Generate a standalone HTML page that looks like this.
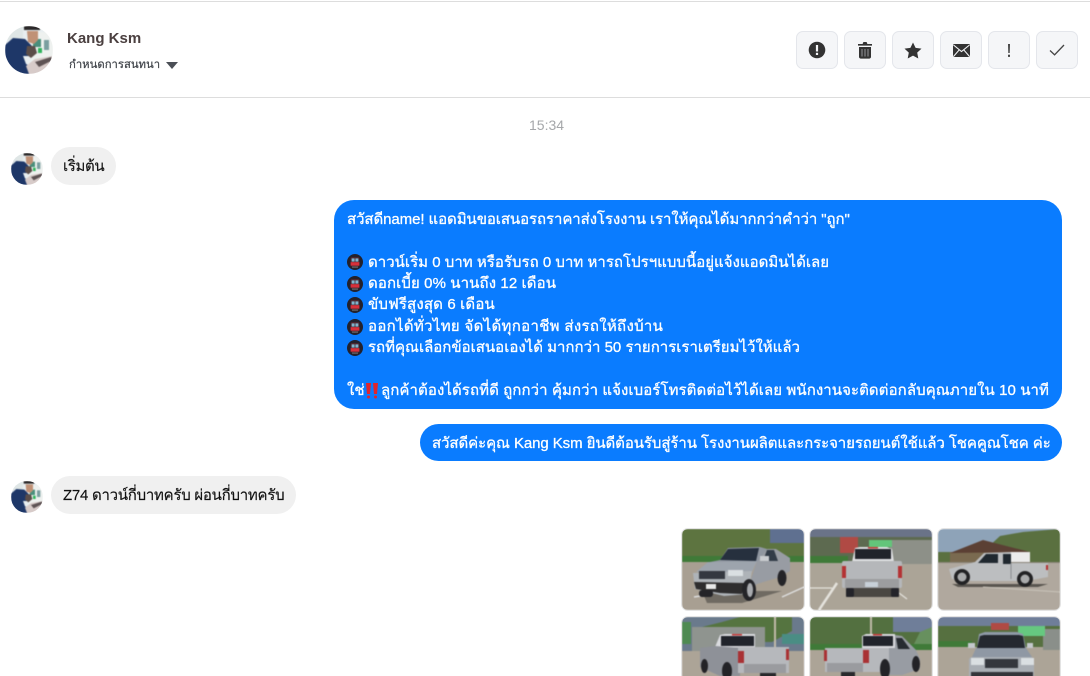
<!DOCTYPE html>
<html lang="th">
<head>
<meta charset="utf-8">
<title>Chat</title>
<style>
html,body{margin:0;padding:0;width:1090px;height:676px;overflow:hidden;background:#fff}
body{position:relative;font-family:"Liberation Sans","Noto Sans CJK JP",sans-serif;color:#111}
.a{position:absolute;white-space:nowrap}
.line{left:0;width:1090px;height:1px;background:#ddd}
.btn{top:31px;width:40px;height:36px;background:#f5f6f8;border:1px solid #e4e6eb;border-radius:7px;display:flex;align-items:center;justify-content:center}
.blue{background:#0a7cff}
.gray{background:#f0f0f0}
.t{font-size:15px;line-height:21px;color:#fff;left:347px;-webkit-text-stroke:.3px #fff}
.d{font-size:15px;line-height:21px;color:#111;-webkit-text-stroke:.15px #111}
.tile{border-radius:6px;overflow:hidden;box-shadow:0 0 0 1px #e3e3e3}
.tile svg{filter:blur(.5px)}
.av{border-radius:50%;overflow:hidden}
.av svg{filter:blur(.5px)}
svg{display:block}
</style>
</head>
<body>
<svg width="0" height="0" style="position:absolute">
<defs>
<symbol id="av" viewBox="0 0 48 48">
<rect width="48" height="48" fill="#e8eef0"/>
<rect x="26" y="6" width="22" height="32" fill="#eef1ef"/>
<rect x="28" y="13" width="8" height="8" fill="#4a8f7c"/>
<rect x="33" y="22" width="4" height="5" fill="#2fb45c"/>
<rect x="39" y="14" width="5" height="10" fill="#7a9fa0"/>
<rect x="0" y="0" width="18" height="14" fill="#dfe6e6"/>
<path d="M0 19L8 12 20 13 27 20 26 30 18 30 21 38 28 42 26 48H0Z" fill="#1e3768"/>
<path d="M22 5H33V14L29 18 23 16Z" fill="#c09176"/>
<path d="M19 0H35V4H19Z" fill="#2b2829"/>
<path d="M22 20L30 20 32 27 26 32 21 28Z" fill="#5b4d49"/>
<path d="M21 40L30 33 48 30V48H24Z" fill="#d7cbc9"/>
<path d="M30 36L46 31 48 34 34 41Z" fill="#5e5354"/>
</symbol>
<symbol id="me" viewBox="0 0 16 16">
<circle cx="8" cy="8" r="8" fill="#23212c"/>
<rect x="3.6" y="3" width="8.8" height="9.6" rx="1.6" fill="#4c2730"/>
<rect x="4.6" y="4.4" width="3" height="3.2" fill="#7fb3cc"/>
<rect x="8.4" y="4.4" width="3" height="3.2" fill="#7fb3cc"/>
<rect x="3.6" y="8.2" width="8.8" height="3.4" fill="#d8303a"/>
<rect x="5" y="12.6" width="6" height="1" fill="#777"/>
</symbol>
<symbol id="car1" viewBox="0 0 122 81">
<rect width="122" height="81" fill="#a89f92"/>
<rect width="122" height="28" fill="#5d7440"/>
<rect x="88" width="34" height="14" fill="#5f7090"/>
<rect y="27" width="122" height="6" fill="#3f7a38"/>
<path d="M100 68L122 58M12 68L25 66" stroke="#ddd" stroke-width="1.5"/>
<path d="M20 62H100L60 74H25Z" fill="#6f6a62"/>
<path d="M75 32L85 20 94 20 108 29 108 42 98 48 75 55 64 65Z" fill="#989ca3"/>
<path d="M28 33L38 31 46 19 78 18 85 20 75 33Z" fill="#8f96a0"/>
<path d="M38 31L46 20 77 19 74 32Z" fill="#26303e"/>
<path d="M81 32L85 21 92 21 96 32Z" fill="#323c48"/>
<path d="M14 43L26 33 75 32 70 43Z" fill="#9da4ad"/>
<path d="M11 44L70 42 66 65 42 67 13 60Z" fill="#aeb3b8"/>
<rect x="17" y="42" width="26" height="8" fill="#343840"/>
<rect x="46" y="41" width="15" height="6" fill="#dadfe2"/>
<path d="M12 53L62 54 60 65 38 64 14 60Z" fill="#2e2d2e"/>
<rect x="24" y="55" width="10" height="5" fill="#e8e8e8"/>
<rect x="78" y="27" width="9" height="5" fill="#c9ccd0"/>
<ellipse cx="67" cy="61" rx="7" ry="11" fill="#242428"/><ellipse cx="68" cy="61" rx="3" ry="7" fill="#a8aaae"/>
<ellipse cx="100" cy="49" rx="4.5" ry="8" fill="#242428"/>
<rect x="17" y="61" width="14" height="7" rx="3" fill="#242428"/>
</symbol>
<symbol id="car2" viewBox="0 0 122 81">
<rect width="122" height="81" fill="#aba497"/>
<rect width="122" height="34" fill="#5d6a50"/>
<rect width="122" height="8" fill="#6a7388"/>
<rect x="80" y="11" width="42" height="24" fill="#8d9088"/>
<rect x="30" y="8" width="18" height="16" fill="#b04a44"/>
<rect x="59" y="11" width="23" height="7" fill="#63c57a"/>
<rect y="27" width="38" height="7" fill="#3f7a38"/>
<path d="M0 59H22M89 64L97 70" stroke="#e4e2dc" stroke-width="1.2"/>
<path d="M9 81L27 54" stroke="#e4e2dc" stroke-width="2.5"/>
<rect x="36" y="58" width="53" height="10" fill="#4a4742"/>
<path d="M42 33L45 19 50 18H77L82 20 84 33Z" fill="#dfe0e2"/>
<rect x="45" y="20" width="36" height="10" fill="#20232a"/>
<rect x="58" y="18" width="10" height="1.5" fill="#c83a3a"/>
<rect x="32" y="32" width="60" height="27" rx="2" fill="#b5b7ba"/>
<rect x="32" y="37" width="4" height="12" fill="#b43234"/><rect x="88" y="37" width="4" height="12" fill="#b43234"/>
<rect x="35" y="50" width="54" height="9" fill="#9c9d9f"/>
<rect x="55" y="53" width="13" height="5" fill="#c8d0d8"/>
<rect x="36" y="59" width="8" height="9" rx="2" fill="#24242a"/><rect x="81" y="59" width="8" height="9" rx="2" fill="#24242a"/>
</symbol>
<symbol id="car3" viewBox="0 0 122 81">
<rect width="122" height="81" fill="#b0a89e"/>
<rect width="122" height="33" fill="#8ea3b8"/>
<path d="M48 20L62 7 85 3 122 0V34H48Z" fill="#5a7040"/>
<rect x="0" y="23" width="14" height="10" fill="#5a7040"/>
<rect x="12" y="23" width="62" height="11" fill="#7a6a50"/>
<path d="M12 24L45 11 92 23Z" fill="#5b4034"/>
<rect x="72" y="23" width="20" height="11" fill="#ececec"/>
<rect y="33" width="122" height="1" fill="#8a8478"/>
<path d="M14 55H110L100 58H20Z" fill="#59554f"/>
<path d="M11 40L37 33 46 24 73 23V34H110L110 48 88 52 34 52 14 50Z" fill="#bcbec0"/>
<path d="M40 34L48 25H60V34Z" fill="#20282f"/><rect x="65" y="25" width="8" height="10" fill="#20282f"/>
<path d="M73 34V50" stroke="#8a8c90"/>
<rect x="108" y="36" width="2" height="5" fill="#b43234"/>
<circle cx="24" cy="48" r="8" fill="#222224"/><circle cx="24" cy="48" r="4.5" fill="#a9aaab"/>
<circle cx="87" cy="50" r="8" fill="#222224"/><circle cx="87" cy="50" r="4.5" fill="#a9aaab"/>
<path d="M45 58L122 63" stroke="#c9c4ba"/>
</symbol>
<symbol id="car4" viewBox="0 0 122 81">
<rect width="122" height="81" fill="#aca497"/>
<rect width="122" height="34" fill="#6a7a8c"/>
<path d="M20 10L40 5 58 0H110V14L90 25H60Z" fill="#557440"/>
<rect x="10" y="10" width="73" height="24" fill="#8f948f"/>
<rect x="0" y="5" width="9" height="22" fill="#4f8a52"/>
<rect x="100" y="17" width="22" height="10" fill="#4a8d84"/>
<rect x="92" y="0" width="2" height="30" fill="#bfb9a8"/>
<path d="M33 30L38 18 43 17H73V31Z" fill="#d9dade"/>
<rect x="39" y="19" width="33" height="10" fill="#21242b"/>
<rect x="50" y="17" width="10" height="1.5" fill="#c83a3a"/>
<path d="M18 31L33 29 58 31V59H38L18 50Z" fill="#8e9198"/>
<rect x="56" y="30" width="51" height="26" fill="#b6b8bc"/>
<rect x="56" y="34" width="6" height="12" fill="#a93134"/><rect x="104" y="32" width="3" height="11" fill="#a93134"/>
<rect x="76" y="49" width="12" height="4" fill="#c8d0d8"/>
<rect x="62" y="47" width="42" height="9" fill="#9a9b9f"/>
<ellipse cx="22.500" cy="49" rx="3.500" ry="7" fill="#232327"/><ellipse cx="45" cy="54" rx="5" ry="9" fill="#232327"/>
<rect x="78" y="56" width="16" height="5" fill="#29292c"/>
</symbol>
<symbol id="car5" viewBox="0 0 122 81">
<rect width="122" height="81" fill="#aca497"/>
<rect width="122" height="33" fill="#537040"/>
<rect x="83" width="39" height="15" fill="#6f7e99"/>
<path d="M110 15L122 10V27H104Z" fill="#67905e"/>
<rect y="27" width="122" height="6" fill="#3f7a38"/>
<rect x="60" y="0" width="2" height="18" fill="#bfb9a8"/>
<path d="M85 18L92 19 106 33 110 42V52L92 58H78V30Z" fill="#989ca3"/>
<path d="M86 21L92 21 100 32H88Z" fill="#272b31"/>
<path d="M52 31V19L56 17H85V31Z" fill="#d9dade"/>
<rect x="53" y="19" width="30" height="10" fill="#21242b"/>
<rect x="63" y="17" width="9" height="1.500" fill="#c83a3a"/>
<rect x="15" y="31" width="64" height="24" fill="#b6b8bc"/>
<rect x="53" y="33" width="6" height="13" fill="#a93134"/><rect x="14" y="33" width="3" height="11" fill="#a93134"/>
<rect x="30" y="49" width="12" height="4" fill="#c8d0d8"/>
<rect x="17" y="46" width="36" height="9" fill="#9a9b9f"/>
<ellipse cx="75" cy="52" rx="5" ry="10" fill="#232327"/><ellipse cx="106" cy="47" rx="4" ry="8" fill="#232327"/>
<rect x="31" y="55" width="14" height="5" fill="#29292c"/>
</symbol>
<symbol id="car6" viewBox="0 0 122 81">
<rect width="122" height="81" fill="#aca497"/>
<rect width="122" height="30" fill="#567040"/>
<rect width="122" height="9" fill="#6f7e99"/>
<rect x="105" y="12" width="17" height="21" fill="#8a8f8a"/>
<rect x="53" y="6" width="18" height="7" fill="#b04a44"/>
<rect x="80" y="9" width="27" height="10" fill="#66c880"/>
<rect y="24" width="34" height="6" fill="#3f7a38"/>
<path d="M39 31L41 17 47 15H79L85 17 88 31Z" fill="#8e99a6"/>
<path d="M39 31L42 19 46 18H81L85 19 87 31Z" fill="#24282f"/>
<rect x="30" y="26" width="7" height="5" fill="#c4c8cc"/><rect x="89" y="26" width="6" height="5" fill="#c4c8cc"/>
<path d="M34 40L38 31H88L94 40Z" fill="#8f98a4"/>
<rect x="31" y="40" width="65" height="22" rx="3" fill="#a9aeb4"/>
<rect x="33" y="41" width="13" height="7" fill="#dadfe2"/><rect x="83" y="41" width="13" height="7" fill="#dadfe2"/>
<rect x="47" y="42" width="33" height="9" fill="#34373d"/>
<rect x="33" y="55" width="62" height="7" fill="#34353a"/>
</symbol>
</defs>
</svg>

<div class="a line" style="top:1px"></div>
<div class="a line" style="top:97px"></div>

<div class="a av" style="left:5px;top:26px;width:48px;height:48px"><svg width="48" height="48"><use href="#av"/></svg></div>
<div class="a" style="left:67px;top:29px;font-size:15px;line-height:20px;font-weight:700;color:#4b4040">Kang Ksm</div>
<div class="a" style="left:69px;top:57px;font-size:11.3px;line-height:16px;color:#3f4349;-webkit-text-stroke:.2px #3f4349">กำหนดการสนทนา</div>
<svg class="a" style="left:166px;top:62px" width="12" height="7"><path d="M0 0H12L6 7Z" fill="#4b4f56"/></svg>

<div class="a btn" style="left:796px"><svg width="18" height="18" viewBox="0 0 18 18"><circle cx="9" cy="9" r="8.3" fill="#333"/><rect x="7.900" y="4" width="2.200" height="6.500" fill="#f5f6f8"/><rect x="7.900" y="11.800" width="2.200" height="2.200" fill="#f5f6f8"/></svg></div>
<div class="a btn" style="left:844px"><svg width="16" height="18" viewBox="0 0 16 18"><path d="M1 3H15V4.600H1ZM5.600 3L6.400 1H9.600L10.400 3Z" fill="#333"/><path d="M2 6H14V16C14 17 13 17.600 12.200 17.600H3.800C3 17.600 2 17 2 16Z" fill="#333"/><path d="M5 8V15.500M8 8V15.500M11 8V15.500" stroke="#8b8d90" stroke-width="1.100"/></svg></div>
<div class="a btn" style="left:892px"><svg width="18" height="17" viewBox="0 0 18 17"><path d="M9 .5L11.600 5.900 17.500 6.600 13.200 10.600 14.300 16.500 9 13.600 3.700 16.500 4.800 10.600.5 6.600 6.400 5.900Z" fill="#333"/></svg></div>
<div class="a btn" style="left:940px"><svg width="17" height="13" viewBox="0 0 17 13"><rect width="17" height="13" rx="1.200" fill="#333"/><path d="M.5 1L8.500 7.500 16.500 1M.5 12.500L6.300 5.800M16.500 12.500L10.700 5.800" fill="none" stroke="#f5f6f8" stroke-width="1.100"/></svg></div>
<div class="a btn" style="left:988px"><svg width="4" height="13" viewBox="0 0 4 13"><path d="M1 0H3L2.700 9H1.300Z" fill="#444"/><rect x="1" y="10.700" width="2" height="2.200" fill="#444"/></svg></div>
<div class="a btn" style="left:1036px"><svg width="16" height="12" viewBox="0 0 16 12"><path d="M1 6.500L5.600 10.800 15 1" fill="none" stroke="#444" stroke-width="1.300"/></svg></div>

<div class="a" style="left:529px;top:117px;font-size:14px;line-height:16px;color:#a5a7aa">15:34</div>

<div class="a av" style="left:11px;top:153px;width:32px;height:32px"><svg width="32" height="32" viewBox="0 0 48 48"><use href="#av" width="48" height="48"/></svg></div>
<div class="a gray" style="left:51px;top:147px;width:65px;height:38px;border-radius:19px"></div>
<div class="a d" style="left:63px;top:156px;letter-spacing:-.35px">เริ่มต้น</div>

<div class="a blue" style="left:334px;top:200px;width:728px;height:209px;border-radius:20px"></div>
<div class="a t" style="top:209px;letter-spacing:-.08px">สวัสดีname! แอดมินขอเสนอรถราคาส่งโรงงาน เราให้คุณได้มากกว่าคำว่า "ถูก"</div>
<svg class="a" style="left:347px;top:254px" width="16" height="16"><use href="#me"/></svg>
<div class="a t" style="left:368px;top:252px;letter-spacing:.02px">ดาวน์เริ่ม 0 บาท หรือรับรถ 0 บาท หารถโปรฯแบบนี้อยู่แจ้งแอดมินได้เลย</div>
<svg class="a" style="left:347px;top:276px" width="16" height="16"><use href="#me"/></svg>
<div class="a t" style="left:368px;top:273px;letter-spacing:.1px">ดอกเบี้ย 0% นานถึง 12 เดือน</div>
<svg class="a" style="left:347px;top:297px" width="16" height="16"><use href="#me"/></svg>
<div class="a t" style="left:368px;top:294px;letter-spacing:.15px">ขับฟรีสูงสุด 6 เดือน</div>
<svg class="a" style="left:347px;top:319px" width="16" height="16"><use href="#me"/></svg>
<div class="a t" style="left:368px;top:316px;letter-spacing:.31px">ออกได้ทั่วไทย จัดได้ทุกอาชีพ ส่งรถให้ถึงบ้าน</div>
<svg class="a" style="left:347px;top:340px" width="16" height="16"><use href="#me"/></svg>
<div class="a t" style="left:368px;top:337px">รถที่คุณเลือกข้อเสนอเองได้ มากกว่า 50 รายการเราเตรียมไว้ให้แล้ว</div>
<div class="a t" style="top:380px">ใช่</div>
<svg class="a" style="left:365px;top:383px" width="14" height="16" viewBox="0 0 14 16"><path d="M1 0H6L5 11H2ZM8 0H13L12 11H9Z" fill="#e0252c"/><rect x="2" y="12.500" width="3" height="3" rx="1.500" fill="#e0252c"/><rect x="9" y="12.500" width="3" height="3" rx="1.500" fill="#e0252c"/></svg>
<div class="a t" style="left:381px;top:380px;letter-spacing:.08px">ลูกค้าต้องได้รถที่ดี ถูกกว่า คุ้มกว่า แจ้งเบอร์โทรติดต่อไว้ได้เลย พนักงานจะติดต่อกลับคุณภายใน 10 นาที</div>

<div class="a blue" style="left:420px;top:424px;width:642px;height:37px;border-radius:18.5px"></div>
<div class="a t" style="left:432px;top:433px;letter-spacing:-.08px">สวัสดีค่ะคุณ Kang Ksm ยินดีต้อนรับสู่ร้าน โรงงานผลิตและกระจายรถยนต์ใช้แล้ว โชคคูณโชค ค่ะ</div>

<div class="a av" style="left:11px;top:481px;width:32px;height:32px"><svg width="32" height="32" viewBox="0 0 48 48"><use href="#av" width="48" height="48"/></svg></div>
<div class="a gray" style="left:51px;top:476px;width:245px;height:38px;border-radius:19px"></div>
<div class="a d" style="left:63px;top:485px;letter-spacing:-.26px">Z74 ดาวน์กี่บาทครับ ผ่อนกี่บาทครับ</div>

<div class="a tile" style="left:682px;top:529px;width:122px;height:81px"><svg width="122" height="81"><use href="#car1" width="122" height="81"/></svg></div>
<div class="a tile" style="left:810px;top:529px;width:122px;height:81px"><svg width="122" height="81"><use href="#car2" width="122" height="81"/></svg></div>
<div class="a tile" style="left:938px;top:529px;width:122px;height:81px"><svg width="122" height="81"><use href="#car3" width="122" height="81"/></svg></div>
<div class="a tile" style="left:682px;top:617px;width:122px;height:81px"><svg width="122" height="81"><use href="#car4" width="122" height="81"/></svg></div>
<div class="a tile" style="left:810px;top:617px;width:122px;height:81px"><svg width="122" height="81"><use href="#car5" width="122" height="81"/></svg></div>
<div class="a tile" style="left:938px;top:617px;width:122px;height:81px"><svg width="122" height="81"><use href="#car6" width="122" height="81"/></svg></div>
</body>
</html>
